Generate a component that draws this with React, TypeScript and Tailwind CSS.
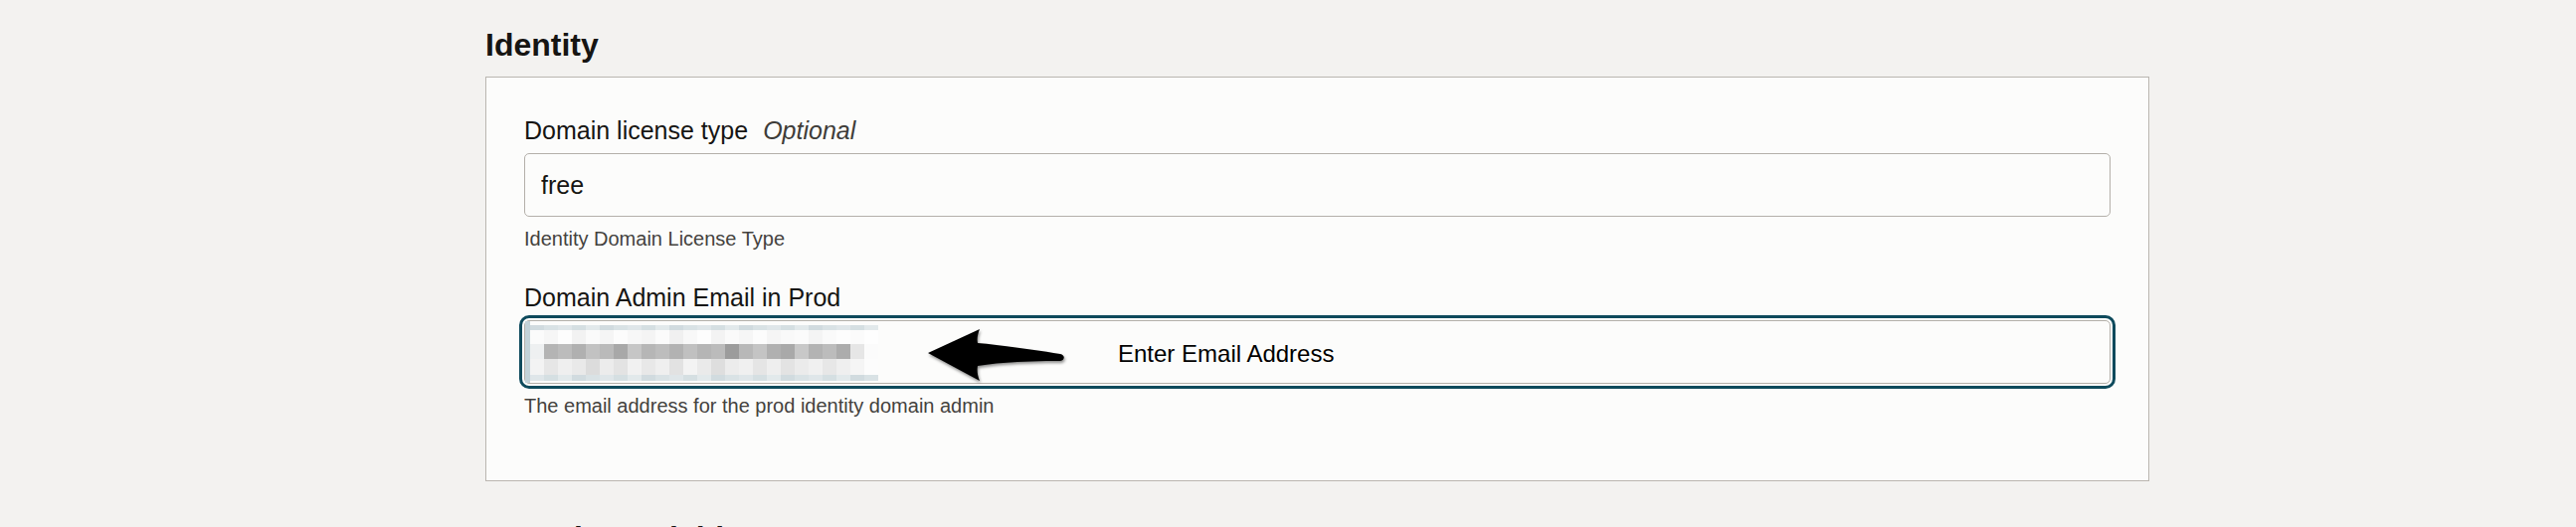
import React from "react";

const row1 = ["#fbfbfb","#f6f6f6","#fdfdfd","#f2f2f2","#fafafa","#f5f5f5","#fcfcfc","#f7f7f7","#f4f4f4","#fbfbfb","#f0f0f0","#f8f8f8","#fdfdfd","#f3f3f3","#fafafa","#f6f6f6","#fcfcfc","#f5f5f5","#f9f9f9","#fbfbfb","#f4f4f4","#fafafa","#fdfdfd","#fbfbfb","#fefefe"];
const row2 = ["#eef0f1","#b4b4b4","#bcbcbc","#b0b0b0","#c2c2c2","#bababa","#a8a8a8","#c6c6c6","#b6b6b6","#bdbdbd","#b2b2b2","#c0c0c0","#b5b5b5","#bbbbbb","#9c9c9c","#b8b8b8","#c4c4c4","#b0b0b0","#a9a9a9","#c8c8c8","#b3b3b3","#bcbcbc","#acacac","#e6e6e6","#fbfbfb"];
const row3 = ["#f3f3f3","#e6e6e6","#efefef","#e9e9e9","#dcdcdc","#ececec","#e3e3e3","#f1f1f1","#e8e8e8","#efefef","#e2e2e2","#f3f3f3","#eaeaea","#dedede","#ececec","#f0f0f0","#e5e5e5","#eeeeee","#e3e3e3","#ebebeb","#f0f0f0","#e7e7e7","#efefef","#f5f5f5","#fcfcfc"];
const strip = ["#d1dbdf","#d9e2e5","#dfe6e9","#d5dfe2","#e2e9eb"];

// pixelated (redacted) email value
const Mosaic = () => (
  <svg width="356" height="62" className="absolute left-0 top-0" shapeRendering="crispEdges">
    <rect x="0" y="0" width="5" height="62" fill="#c2d2d8" />
    {row1.map((_, i) => (
      <g key={i}>
        <rect x={5 + i * 14} y="4" width="14" height="5" fill={strip[i % 5]} />
        <rect x={5 + i * 14} y="9" width="14" height="14" fill={row1[i]} />
        <rect x={5 + i * 14} y="23" width="14" height="15" fill={row2[i]} />
        <rect x={5 + i * 14} y="38" width="14" height="16" fill={row3[i]} />
        <rect x={5 + i * 14} y="54" width="14" height="6" fill={strip[(i + 2) % 5]} />
      </g>
    ))}
  </svg>
);

const Arrow = () => (
  <svg
    width="560"
    height="70"
    className="absolute left-0 top-0 overflow-visible drop-shadow-[1px_2px_1.5px_rgba(0,0,0,0.45)]"
  >
    <path
      d="M 405 32 L 457 8 C 455 13, 454 18, 455 22 C 478 24, 512 29, 538 33 C 543 34, 543 39, 538 40 C 510 40, 478 41, 455 45 C 454 50, 455 55, 457 60 Z"
      fill="#000"
    />
  </svg>
);

export default function App() {
  return (
    <div className="min-h-screen bg-[#f3f2f0] font-['Liberation_Sans',Arial,sans-serif] text-[#161513]">
      <div className="ml-[488px] w-[1673px] pt-[26px]">
        <h2 className="text-[32px] leading-[38px] font-bold">Identity</h2>

        <section className="mt-[13px] border border-[#bab6b0] bg-[#fcfcfb] px-[38px] pt-[38px] pb-[63px]">
          <div>
            <label className="block text-[25px] leading-[30px]">
              Domain license type
              <span className="ml-[15px] italic text-[#3e3c39]">Optional</span>
            </label>
            <div className="mt-[8px] flex h-[64px] items-center rounded-[5px] border border-[#b4b0aa] bg-[#fcfcfb] pl-[16px] text-[25px] leading-[30px]">
              free
            </div>
            <p className="mt-[10px] text-[20px] leading-[24px] text-[#44423e]">Identity Domain License Type</p>
          </div>

          <div className="mt-[32px]">
            <label className="block text-[25px] leading-[30px]">Domain Admin Email in Prod</label>
            <div className="relative mt-[8px] h-[64px] rounded-[5px] border border-[#b4b0aa] bg-[#fcfcfb] outline-3 outline-offset-2 outline-[#0e4a5c]">
              <Mosaic />
              <Arrow />
              <span className="absolute left-[596px] top-[19px] text-[24px] leading-[28px] text-black">
                Enter Email Address
              </span>
            </div>
            <p className="mt-[10px] text-[20px] leading-[24px] text-[#44423e]">
              The email address for the prod identity domain admin
            </p>
          </div>
        </section>

        <h2 className="mt-[38px] text-[32px] leading-[38px] font-bold">Security Variables</h2>
      </div>
    </div>
  );
}
